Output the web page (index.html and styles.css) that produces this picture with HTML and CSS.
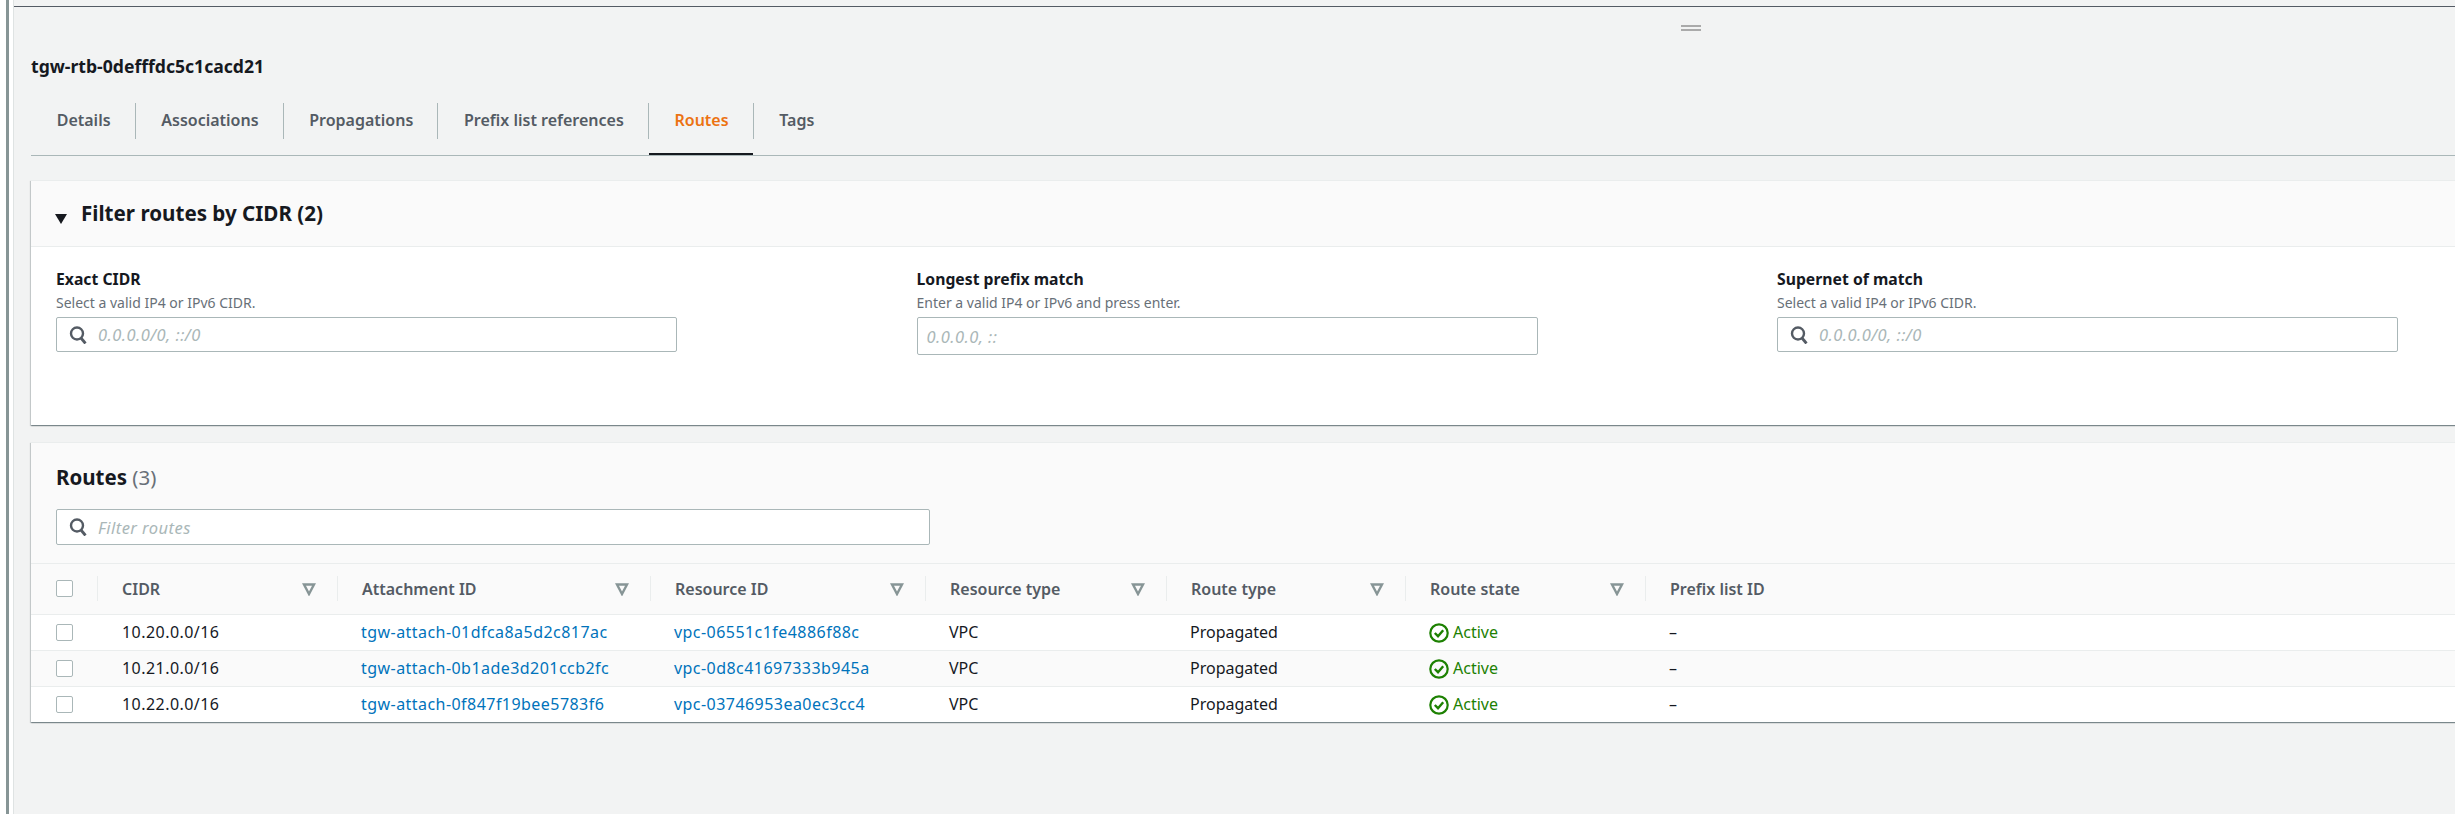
FILE: index.html
```html
<!DOCTYPE html>
<html lang="en">
<head>
    <meta charset="UTF-8">
    <meta name="viewport" content="width=device-width, initial-scale=1.0">
    <title>Transit gateway route table</title>
    <link rel="stylesheet" href="styles.css">
</head>
<body>
    <svg class="defs" width="0" height="0">
        <symbol id="search" viewBox="0 0 18 18">
            <circle cx="8" cy="7.5" r="6" fill="none" stroke="currentColor" stroke-width="2.4"/>
            <path d="M12 12l4.5 5.5" fill="none" stroke="currentColor" stroke-width="2.8"/>
        </symbol>
        <symbol id="caret" viewBox="0 0 14 14">
            <path d="M2 2.5h10l-5 9.5z" fill="none" stroke="currentColor" stroke-width="2.4"/>
        </symbol>
        <symbol id="ok" viewBox="0 0 20 20">
            <circle cx="10" cy="10" r="8.7" fill="none" stroke="currentColor" stroke-width="2.2"/>
            <path d="M5.8 10l3.2 3.2 5.2-6" fill="none" stroke="currentColor" stroke-width="2.4"/>
        </symbol>
    </svg>

    <div class="shell">
        <div class="rail"></div>
        <main class="content">
            <div class="grip"></div>
            <h1 class="title">tgw-rtb-0defffdc5c1cacd21</h1>

            <nav class="tabs">
                <a class="tab">Details</a>
                <a class="tab">Associations</a>
                <a class="tab">Propagations</a>
                <a class="tab">Prefix list references</a>
                <a class="tab active">Routes</a>
                <a class="tab last">Tags</a>
            </nav>

            <section class="panel filter-panel">
                <header class="panel-head">
                    <span class="arrow"></span>
                    <h2>Filter routes by CIDR (2)</h2>
                </header>
                <div class="fields">
                    <div class="field">
                        <label>Exact CIDR</label>
                        <p>Select a valid IP4 or IPv6 CIDR.</p>
                        <div class="input"><svg class="search"><use href="#search"/></svg><em>0.0.0.0/0, ::/0</em></div>
                    </div>
                    <div class="field">
                        <label>Longest prefix match</label>
                        <p>Enter a valid IP4 or IPv6 and press enter.</p>
                        <div class="input tall"><em>0.0.0.0, ::</em></div>
                    </div>
                    <div class="field">
                        <label>Supernet of match</label>
                        <p>Select a valid IP4 or IPv6 CIDR.</p>
                        <div class="input"><svg class="search"><use href="#search"/></svg><em>0.0.0.0/0, ::/0</em></div>
                    </div>
                </div>
            </section>

            <section class="panel routes-panel">
                <header class="routes-head">
                    <h2>Routes <span>(3)</span></h2>
                    <div class="input wide"><svg class="search"><use href="#search"/></svg><em>Filter routes</em></div>
                </header>
                <table class="routes">
                    <colgroup>
                        <col class="c0"><col class="c1"><col class="c2"><col class="c3"><col class="c4"><col class="c5"><col class="c6"><col>
                    </colgroup>
                    <thead>
                        <tr>
                            <th><span class="check"></span></th>
                            <th><div class="th">CIDR<svg class="caret"><use href="#caret"/></svg></div></th>
                            <th><div class="th">Attachment ID<svg class="caret"><use href="#caret"/></svg></div></th>
                            <th><div class="th">Resource ID<svg class="caret"><use href="#caret"/></svg></div></th>
                            <th><div class="th">Resource type<svg class="caret"><use href="#caret"/></svg></div></th>
                            <th><div class="th">Route type<svg class="caret"><use href="#caret"/></svg></div></th>
                            <th><div class="th">Route state<svg class="caret"><use href="#caret"/></svg></div></th>
                            <th><div class="th">Prefix list ID</div></th>
                        </tr>
                    </thead>
                    <tbody>
                        <tr>
                            <td><span class="check"></span></td>
                            <td class="num">10.20.0.0/16</td>
                            <td><a>tgw-attach-01dfca8a5d2c817ac</a></td>
                            <td><a>vpc-06551c1fe4886f88c</a></td>
                            <td>VPC</td>
                            <td>Propagated</td>
                            <td class="state"><svg class="ok"><use href="#ok"/></svg>Active</td>
                            <td>–</td>
                        </tr>
                        <tr>
                            <td><span class="check"></span></td>
                            <td class="num">10.21.0.0/16</td>
                            <td><a>tgw-attach-0b1ade3d201ccb2fc</a></td>
                            <td><a>vpc-0d8c41697333b945a</a></td>
                            <td>VPC</td>
                            <td>Propagated</td>
                            <td class="state"><svg class="ok"><use href="#ok"/></svg>Active</td>
                            <td>–</td>
                        </tr>
                        <tr>
                            <td><span class="check"></span></td>
                            <td class="num">10.22.0.0/16</td>
                            <td><a>tgw-attach-0f847f19bee5783f6</a></td>
                            <td><a>vpc-03746953ea0ec3cc4</a></td>
                            <td>VPC</td>
                            <td>Propagated</td>
                            <td class="state"><svg class="ok"><use href="#ok"/></svg>Active</td>
                            <td>–</td>
                        </tr>
                    </tbody>
                </table>
            </section>
        </main>
    </div>
</body>
</html>
```

FILE: styles.css
```css
html, body { margin: 0; height: 100%; }
body { background: #fff; color: #16191f; font-family: "Noto Sans", sans-serif; font-size: 16px; overflow: hidden; }
h1, h2, p { margin: 0; }
.defs { display: block; height: 0; }

.shell { display: flex; height: 814px; padding-left: 6px; }
.rail { width: 3px; flex: none; background: #879596; margin-right: 4px; }
.content { position: relative; flex: none; width: 2560px; background: #f2f3f3; border-left: 1px solid #dfe3e3; padding: 0 0 0 17px; }
.content::before { content: ""; display: block; height: 7px; margin-left: -17px; border-bottom: 1px solid #545b64; box-sizing: border-box; }

.grip { position: absolute; left: 1667px; top: 25px; width: 20px; height: 2px; border-top: 2px solid #aaa; border-bottom: 2px solid #aaa; }

.title { font-size: 17.6px; font-weight: 700; line-height: 24px; padding-top: 47px; padding-bottom: 1px; }

.tabs { display: flex; margin-top: 24px; height: 52px; border-bottom: 1px solid #aab7b8; }
.tab { position: relative; height: 36px; line-height: 34px; padding: 0 24px 0 25.7px; border-right: 1px solid #aab7b8; color: #545b64; font-weight: 600; font-size: 16px; }
.tab.active { color: #ec7211; }
.tab.active::after { content: ""; position: absolute; left: 0; right: 0; bottom: -16px; height: 2px; background: #16191f; }
.tab.last { border-right: 0; }

.panel { background: #fff; border-top: 1px solid #eaeded; box-shadow: 0 1px 1px 0 rgba(0, 28, 36, .3), 1px 1px 1px 0 rgba(0, 28, 36, .15), -1px 1px 1px 0 rgba(0, 28, 36, .15); }
.filter-panel { margin-top: 24px; height: 244px; }
.panel-head { display: flex; align-items: center; box-sizing: border-box; height: 66px; background: #fafafa; border-bottom: 1px solid #eaeded; padding: 0 0 2px 24px; }
.panel-head h2 { font-size: 20.6px; font-weight: 700; margin-left: 14px; }
.arrow { width: 0; height: 0; margin-top: 12px; border-left: 6.5px solid transparent; border-right: 6.5px solid transparent; border-top: 10px solid #16191f; }

.fields { display: grid; grid-template-columns: repeat(3, 621px); column-gap: 239.5px; padding: 20px 0 0 25px; }
.field label { display: block; font-size: 15.75px; font-weight: 700; line-height: 24px; }
.field p { font-size: 14px; line-height: 18px; color: #687078; margin-top: 3px; margin-bottom: 5px; }

.input { display: flex; align-items: center; box-sizing: border-box; height: 35px; background: #fff; border: 1px solid #aab7b8; border-radius: 2px; padding-left: 12px; }
.input.tall { height: 38px; padding-left: 9px; }
.input em { color: #aab7b8; font-size: 16.5px; letter-spacing: .45px; }
.input.wide { width: 874px; height: 36px; margin-top: 18px; }
.search { width: 18px; height: 18px; color: #545b64; margin-right: 11px; }

.routes-panel { margin-top: 17px; }
.routes-head { background: #fafafa; height: 120px; box-sizing: border-box; padding: 21px 0 0 25px; }
.routes-head h2 { font-size: 20.5px; font-weight: 700; line-height: 27px; }
.routes-head h2 span { font-weight: 400; color: #687078; }

.routes { width: 100%; table-layout: fixed; border-collapse: collapse; font-size: 16px; }
.c0 { width: 66px; }
.c1 { width: 240px; }
.c2 { width: 313px; }
.c3 { width: 275px; }
.c4 { width: 241px; }
.c5 { width: 239px; }
.c6 { width: 240px; }
.routes th { height: 51px; padding: 0 0 1px; box-sizing: border-box; background: #fafafa; border-top: 1px solid #eaeded; border-bottom: 1px solid #eaeded; color: #545b64; font-weight: 600; font-size: 16px; text-align: left; }
.th { display: flex; align-items: center; justify-content: space-between; height: 25px; padding: 0 21px 0 24px; border-left: 1px solid #eaeded; }
.caret { width: 14px; height: 14px; color: #879596; }
.routes td { height: 34px; padding: 0 0 1px 24px; border-bottom: 1px solid #eaeded; }
.routes td.num { padding-left: 25px; letter-spacing: .45px; }
.routes tbody tr:nth-child(even) td { background: #fafafa; }
.routes tbody tr:last-child td { border-bottom: 0; }
.routes a { color: #0073bb; letter-spacing: .45px; }

.routes th:first-child, .routes td:first-child { padding-left: 25px; }
.check { display: block; box-sizing: border-box; width: 17px; height: 17px; background: #fff; border: 1px solid #aab7b8; border-radius: 2px; }

.state { color: #1d8102; }
.ok { width: 20px; height: 20px; vertical-align: -5px; margin-right: 4px; }
```
